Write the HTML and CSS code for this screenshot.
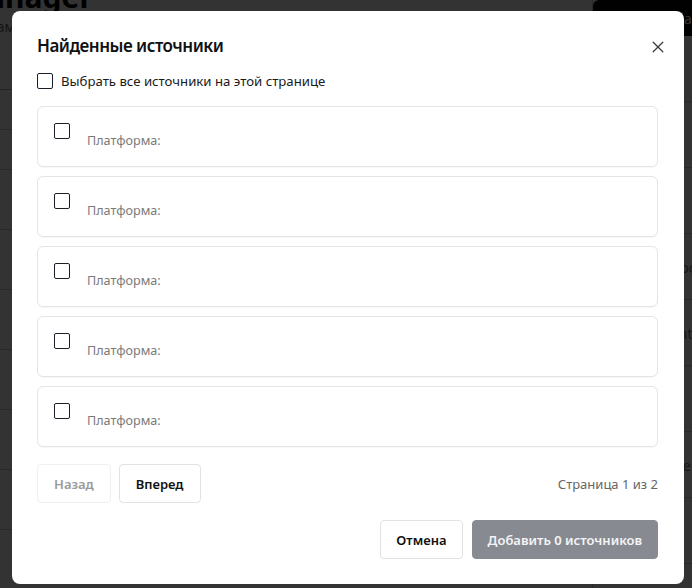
FILE: index.html
```html
<!DOCTYPE html>
<html lang="ru">
<head>
<meta charset="utf-8">
<title>Найденные источники</title>
<link rel="stylesheet" href="styles.css">
</head>
<body>
<div class="page">
  <main class="page-main">
    <h1 class="page-title">Source Manager</h1>
    <p class="page-sub">Управляйте источниками данных</p>
    <p class="page-sub">для вашего анализа</p>
    <div class="page-tabs"><span>Поиск</span><span>Платформа</span></div>
    <div class="page-row short"><span class="muted">Проверка</span></div>
    <div class="page-row short"></div>
    <div class="page-row"><span class="strong">Источники</span></div>
    <div class="page-row"><span class="muted">www.yandex.ru</span></div>
    <div class="page-row"><span class="muted">tools.example.com</span></div>
    <div class="page-row"><span class="strong">Global</span><span class="muted">schema.org</span></div>
    <div class="page-row"><span class="strong">Hub</span><span class="muted">www.news.ru</span></div>
    <div class="page-row"><span class="strong">Каналы</span><span class="muted">links.example</span></div>
  </main>
  <aside class="page-side">
    <div class="side-head"><span>Добавить</span></div>
    <div class="side-row"></div>
    <div class="side-row"></div>
    <div class="side-row"></div>
    <div class="side-row"><span>Тип: ресурс</span></div>
    <div class="side-row"><span>Формат: html</span></div>
    <div class="side-row"><span>Сайт</span></div>
    <div class="side-row"><span>Статус: live</span></div>
    <div class="side-row"><span>Язык: la</span></div>
  </aside>
</div>

<div class="overlay">
  <section class="modal" role="dialog" aria-labelledby="modal-title">
    <button class="close" aria-label="Закрыть">
      <svg width="12" height="12" viewBox="0 0 12 12"><path d="M1.2 1.2L10.8 10.8M10.8 1.2L1.2 10.8" stroke="#3a3a3a" stroke-width="1.25" stroke-linecap="round"/></svg>
    </button>
    <h2 class="modal-title" id="modal-title">Найденные источники</h2>
    <label class="select-all"><span class="box"></span>Выбрать все источники на этой странице</label>

    <ul class="list">
      <li class="card"><span class="box"></span><div class="card-body"><div class="card-meta">Платформа:</div></div></li>
      <li class="card"><span class="box"></span><div class="card-body"><div class="card-meta">Платформа:</div></div></li>
      <li class="card"><span class="box"></span><div class="card-body"><div class="card-meta">Платформа:</div></div></li>
      <li class="card"><span class="box"></span><div class="card-body"><div class="card-meta">Платформа:</div></div></li>
      <li class="card"><span class="box"></span><div class="card-body"><div class="card-meta">Платформа:</div></div></li>
    </ul>

    <div class="pager">
      <div class="pager-buttons">
        <button class="btn btn-disabled">Назад</button>
        <button class="btn">Вперед</button>
      </div>
      <span class="pager-info">Страница 1 из 2</span>
    </div>

    <div class="footer">
      <button class="btn btn-footer">Отмена</button>
      <button class="btn btn-footer btn-primary-disabled">Добавить 0 источников</button>
    </div>
  </section>
</div>
</body>
</html>
```

FILE: styles.css
```css
* { box-sizing: border-box; }

html, body {
  margin: 0;
  padding: 0;
  width: 692px;
  height: 588px;
  overflow: hidden;
  background: #fff;
  font-family: "Noto Sans", "Open Sans", "Liberation Sans", sans-serif;
}

/* ---------- background page ---------- */
.page {
  display: flex;
  height: 588px;
}

.page-main {
  flex: 1;
  margin-left: -150px;
  padding-right: 12px;
}

.page-title {
  margin: -20px 0 4px;
  font-size: 30px;
  font-weight: 700;
  color: #000;
  line-height: 34px;
}

.page-sub {
  margin: 0;
  font-size: 14px;
  line-height: 18px;
  color: #666;
}

.page-tabs {
  margin-top: 10px;
  display: flex;
  gap: 20px;
  height: 26px;
  border-bottom: 1px solid #bbb;
  font-size: 14px;
  color: #666;
}

.page-row {
  min-height: 60px;
  border-bottom: 1px solid #c8c8c8;
  display: flex;
  flex-direction: column;
  justify-content: center;
  gap: 4px;
  font-size: 15px;
  padding-left: 4px;
}

.page-row.short { min-height: 40px; }

.page-row .strong { font-weight: 700; color: #000; }
.page-row .muted { color: #777; }

.page-side {
  width: 100px;
  border-left: 1px solid #ccc;
}

.side-head {
  height: 36px;
  background: #07080c;
  border-radius: 6px 0 0 0;
  color: #fff;
  font-size: 14px;
  display: flex;
  align-items: center;
  padding-left: 64px;
}

.side-row {
  height: 66px;
  border-bottom: 1px solid #c8c8c8;
  display: flex;
  align-items: center;
  font-size: 15px;
  color: #777;
  padding-left: 20px;
  white-space: nowrap;
  overflow: hidden;
}

/* ---------- overlay & modal ---------- */
.overlay {
  position: fixed;
  inset: 0;
  background: rgba(0, 0, 0, 0.8);
  display: flex;
  align-items: flex-start;
  padding: 11px 0 0 12px;
}

.modal {
  position: relative;
  width: 672px;
  background: #fff;
  border-radius: 8px;
  padding: 23px 26px 25px 25px;
  color: #111;
}

.close {
  position: absolute;
  top: 30px;
  right: 20px;
  width: 12px;
  height: 12px;
  padding: 0;
  border: 0;
  background: none;
  display: flex;
  cursor: pointer;
}

.modal-title {
  margin: 0;
  font-size: 17px;
  line-height: 24px;
  font-weight: 600;
  letter-spacing: -0.5px;
  color: #111;
}

.box {
  flex: none;
  width: 16px;
  height: 16px;
  border: 1.5px solid #1b1f2a;
  border-radius: 2px;
  background: #fff;
}

.select-all {
  margin: 15px 0 17px;
  display: flex;
  align-items: center;
  gap: 8px;
  font-size: 13.2px;
  line-height: 16px;
  color: #1a1a1a;
}

.list {
  list-style: none;
  margin: 0;
  padding: 0;
  display: flex;
  flex-direction: column;
  gap: 9px;
}

.card {
  display: flex;
  gap: 17px;
  padding: 16px;
  border: 1px solid #e4e4e4;
  border-radius: 6px;
  box-shadow: 0 1px 1px rgba(0, 0, 0, 0.03);
}

.card-body {
  padding-top: 9px;
}

.card-meta {
  font-size: 12.6px;
  line-height: 18px;
  color: #7a7a7a;
}

.pager {
  margin-top: 17px;
  display: flex;
  align-items: center;
  justify-content: space-between;
}

.pager-buttons {
  display: flex;
  gap: 8px;
}

.pager-info {
  font-size: 13px;
  color: #666;
}

.btn {
  height: 39px;
  padding: 0 16px;
  border: 1px solid #e2e2e2;
  border-radius: 4px;
  background: #fff;
  font-family: inherit;
  font-size: 13px;
  font-weight: 600;
  color: #111;
}

.btn-footer {
  padding: 0 15px;
}

.btn-disabled {
  border-color: #f0f0f0;
  color: #9a9a9a;
}

.footer {
  margin-top: 17px;
  display: flex;
  justify-content: flex-end;
  gap: 9px;
}

.btn-primary-disabled {
  background: #878a91;
  border-color: #878a91;
  color: #f4f4f5;
}
```
